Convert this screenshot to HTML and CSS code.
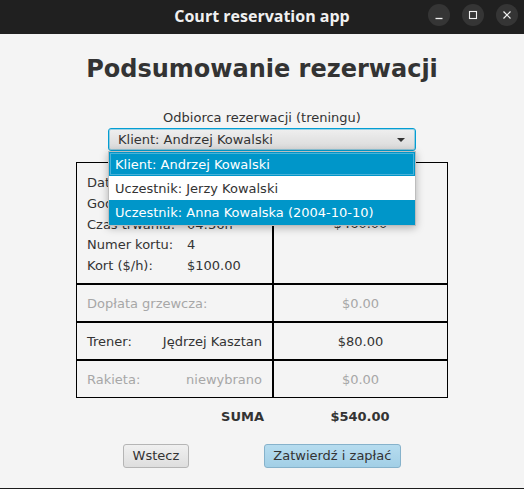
FILE: index.html
```html
<!DOCTYPE html>
<html lang="pl">
<head>
<meta charset="utf-8">
<title>Court reservation app</title>
<link rel="stylesheet" href="styles.css">
</head>
<body>
<div class="window">
  <header class="titlebar">
    <span class="spacer"></span>
    <span class="title">Court reservation app</span>
    <div class="controls">
      <span class="ctl"><svg width="22" height="22" viewBox="0 0 22 22"><line x1="7.5" y1="14.5" x2="14.5" y2="14.5" stroke="#f0f0f0" stroke-width="1.3"/></svg></span>
      <span class="ctl"><svg width="22" height="22" viewBox="0 0 22 22"><rect x="7.5" y="7.5" width="7" height="7" fill="none" stroke="#f0f0f0" stroke-width="1.1"/></svg></span>
      <span class="ctl"><svg width="22" height="22" viewBox="0 0 22 22"><path d="M7.5 7.5 L14.5 14.5 M14.5 7.5 L7.5 14.5" stroke="#f0f0f0" stroke-width="1.2"/></svg></span>
    </div>
  </header>

  <main class="content">
    <h1 class="heading">Podsumowanie rezerwacji</h1>

    <div class="recipient">
      <div class="recipient-label">Odbiorca rezerwacji (treningu)</div>
      <div class="combo-wrap">
        <div class="combo">
          <span class="combo-text">Klient: Andrzej Kowalski</span>
          <svg class="combo-arrow" width="8" height="4" viewBox="0 0 8 4"><polygon points="0,0 8,0 4,4" fill="#333"/></svg>
        </div>
        <ul class="popup">
          <li class="opt opt-selected opt-focused">Klient: Andrzej Kowalski</li>
          <li class="opt">Uczestnik: Jerzy Kowalski</li>
          <li class="opt opt-selected opt-last">Uczestnik: Anna Kowalska (2004-10-10)</li>
        </ul>
      </div>
    </div>

    <div class="summary">
      <div class="cell cell-details">
        <span>Data:</span><span>12.05.24</span>
        <span>Godzina:</span><span>10:00</span>
        <span>Czas trwania:</span><span>04:36h</span>
        <span>Numer kortu:</span><span>4</span>
        <span>Kort ($/h):</span><span>$100.00</span>
      </div>
      <div class="cell cell-price">$460.00</div>

      <div class="cell cell-row muted"><span>Dopłata grzewcza:</span></div>
      <div class="cell cell-price muted">$0.00</div>

      <div class="cell cell-row"><span>Trener:</span><span>Jędrzej Kasztan</span></div>
      <div class="cell cell-price">$80.00</div>

      <div class="cell cell-row muted"><span>Rakieta:</span><span>niewybrano</span></div>
      <div class="cell cell-price muted">$0.00</div>
    </div>

    <div class="total">
      <span class="total-label">SUMA</span>
      <span class="total-value">$540.00</span>
    </div>

    <div class="actions">
      <button class="btn">Wstecz</button>
      <button class="btn btn-default">Zatwierdź i zapłać</button>
    </div>
  </main>
</div>
</body>
</html>
```

FILE: styles.css
```css
* { box-sizing: border-box; }

html, body {
  margin: 0;
  padding: 0;
}

body {
  width: 524px;
  height: 489px;
  overflow: hidden;
  background: #f4f4f4;
  font-family: "DejaVu Sans", sans-serif;
  font-size: 13px;
  color: #333333;
}

.window {
  width: 524px;
  height: 489px;
  display: flex;
  flex-direction: column;
  border-bottom: 1px solid #1c1c1c;
}

.titlebar {
  height: 34px;
  flex: 0 0 34px;
  background: #202020;
  display: grid;
  grid-template-columns: 1fr auto 1fr;
}

.title {
  font-family: "Open Sans", "DejaVu Sans", sans-serif;
  font-weight: 700;
  font-size: 16px;
  line-height: 32px;
  color: #f0f0f0;
}

.controls {
  justify-self: end;
  display: flex;
  gap: 12px;
  padding: 4px 6px 0 0;
}

.ctl {
  width: 22px;
  height: 22px;
  border-radius: 50%;
  background: #353535;
  display: block;
}

.ctl svg { display: block; }

.content {
  flex: 1;
  display: flex;
  flex-direction: column;
  align-items: center;
  padding-top: 21px;
}

.heading {
  margin: 0;
  font-size: 24px;
  line-height: 28px;
  font-weight: 700;
  color: #333333;
}

.recipient {
  margin-top: 27px;
  display: flex;
  flex-direction: column;
  align-items: center;
}

.recipient-label {
  line-height: 15px;
}

.combo-wrap {
  position: relative;
  margin-top: 3px;
  width: 308px;
}

.combo {
  height: 23px;
  border: 1px solid #039ed3;
  border-radius: 3px;
  background: linear-gradient(#efefef, #d9d9d9);
  box-shadow: inset 0 0 0 1px rgba(3, 158, 211, 0.35);
  display: flex;
  align-items: center;
  justify-content: space-between;
  padding: 0 10px 0 9px;
  line-height: 15px;
}

.combo-arrow { display: block; }

.popup {
  position: absolute;
  left: 0;
  top: 23px;
  width: 308px;
  margin: 0;
  padding: 0;
  list-style: none;
  background: #ffffff;
  border: 1px solid #bdbdbd;
  box-shadow: 0 2px 8px rgba(0, 0, 0, 0.28);
  z-index: 10;
}

.opt {
  height: 24px;
  line-height: 26px;
  padding-left: 6px;
  color: #333333;
  white-space: nowrap;
}

.opt-last { height: 25px; }

.opt-selected {
  background: #0096c9;
  color: #ffffff;
}

.opt-focused {
  box-shadow: inset 0 0 0 1px #0096c9, inset 0 0 0 2px #48b2d9;
}

.summary {
  margin-top: 11px;
  display: grid;
  grid-template-columns: 195px 173px;
  grid-template-rows: 120px 36px 36px 36px;
  gap: 2px;
  border: 1px solid #000000;
  background: #000000;
}

.cell {
  background: #f4f4f4;
  white-space: nowrap;
}

.cell-details {
  display: grid;
  grid-template-columns: 100px 75px;
  grid-auto-rows: 20.75px;
  align-content: center;
  padding: 4px 10px 0;
  line-height: 20.75px;
  overflow: hidden;
}

.cell-row {
  display: flex;
  align-items: center;
  justify-content: space-between;
  padding: 0 10px;
  line-height: 15px;
}

.cell-price {
  display: flex;
  align-items: center;
  justify-content: center;
  line-height: 15px;
}

.muted { color: #a7a7a7; }

.total {
  margin-top: 11px;
  width: 372px;
  display: grid;
  grid-template-columns: 196px 176px;
  font-weight: 700;
  line-height: 15px;
}

.total-label {
  text-align: right;
  padding-right: 8px;
}

.total-value {
  text-align: center;
}

.actions {
  margin-top: 20px;
  display: flex;
  gap: 75px;
}

.btn {
  font-family: "DejaVu Sans", sans-serif;
  font-size: 13px;
  line-height: 14px;
  color: #333333;
  padding: 4px 8.5px;
  border: 1px solid #b5b5b5;
  border-radius: 3px;
  background: linear-gradient(#f0f0f0, #dedede);
  margin: 0;
}

.btn-default {
  border-color: #86b2cb;
  background: linear-gradient(#b6dcef, #a2cfe6);
}
```
